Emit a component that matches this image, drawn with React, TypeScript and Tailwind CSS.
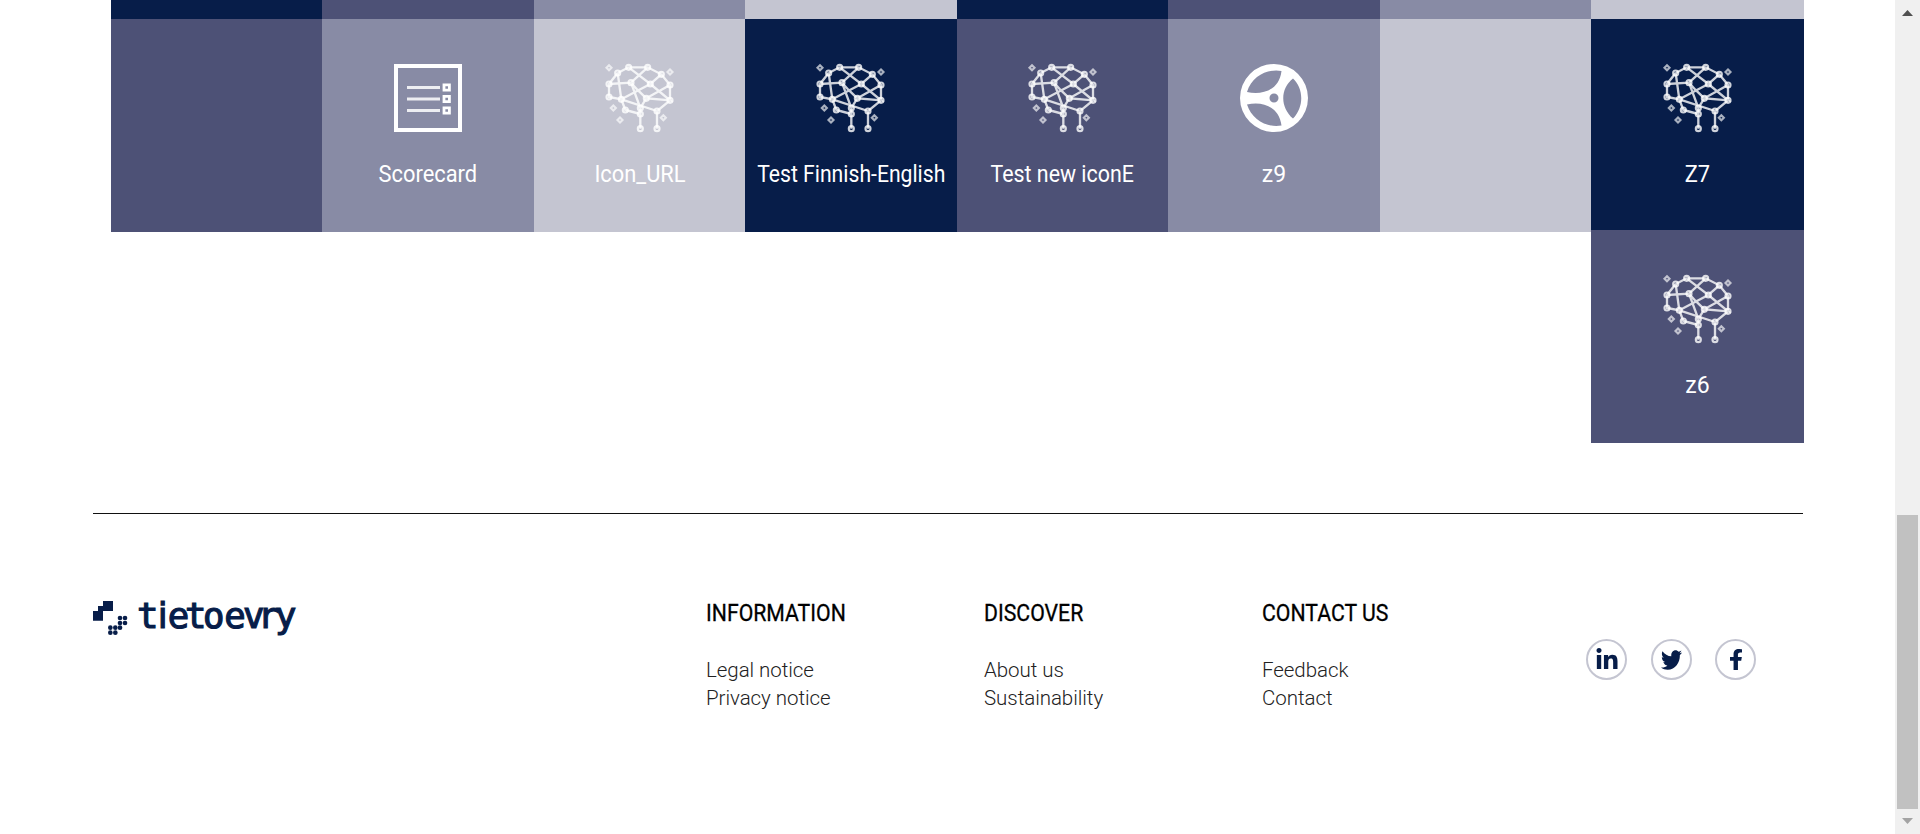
import React from "react";
import { FaFacebookF, FaLinkedinIn, FaTwitter } from "react-icons/fa";

const nodes: [number, number][] = [
  [120, 51], [177, 51], [87, 68], [218, 72], [61, 101], [127, 97], [185, 101],
  [244, 104], [61, 140], [98, 147], [173, 144], [244, 150], [110, 179],
  [155, 173], [155, 191], [205, 182], [155, 235], [205, 235],
];
const sparks: [number, number][] = [[61, 52], [244, 65], [74, 173], [94, 209], [224, 202]];

function Brain() {
  return (
    <svg className="size-17 overflow-visible" viewBox="52 41 204 204" fill="none" stroke="white" strokeOpacity={0.8} strokeWidth={7}>
      <path d="M87 68L120 51H177L218 72L244 104V150L205 182V235M87 68L61 101V140L98 147L110 179L155 191V235M87 68L98 147L205 182M61 101L127 97L177 51M120 51L185 101L218 72M127 97L155 173V191M127 97L146 118L173 144M98 147L185 101M185 101L244 150L173 144L155 173M244 104L173 144" />
      {nodes.map(([x, y]) => <circle key={`${x}-${y}`} cx={x} cy={y} r={7.5} strokeWidth={6.5} />)}
      {sparks.map(([x, y]) => <path key={`${x}-${y}`} strokeWidth={6.5} strokeOpacity={0.65} d={`M${x} ${y - 7.5}l7.5 7.5l-7.5 7.5l-7.5-7.5z`} />)}
    </svg>
  );
}

function Scorecard() {
  return (
    <svg className="size-17" viewBox="0 0 68 68" fill="none" stroke="white">
      <rect x="2" y="2" width="64" height="64" strokeWidth="4" />
      <path strokeWidth="2.8" strokeOpacity="0.85" d="M13 23.5H46M13 35H46M13 46.5H46" />
      <path strokeWidth="2.8" d="M50 20.8h5.4v5.4H50zM50 32.3h5.4v5.4H50zM50 43.8h5.4v5.4H50z" />
    </svg>
  );
}

function Wheel() {
  return (
    <svg className="size-17" viewBox="0 0 68 68">
      <path fill="white" fillRule="evenodd" d="M34 0a34 34 0 1 1 0 68a34 34 0 1 1 0-68zM41.5 7C29 4.5 12 11 7 28C20 31 39 28 41.5 7zM7 40.5C12 56 27 64 41.5 61.5C39 42 22 37 7 40.5zM53 14.5C40 25 40 43 53 54.5C64 43 64 25 53 14.5zM34 29.5a4.5 4.5 0 1 0 0 9a4.5 4.5 0 1 0 0-9z" />
    </svg>
  );
}

function Tile({ className, icon, label, fit = "" }: { className: string; icon?: React.ReactNode; label?: string; fit?: string }) {
  return (
    <div className={`flex flex-col items-center pt-[45px] text-white ${className}`}>
      {icon}
      {label && <div className={`mt-[28px] text-[23px] leading-[30px] whitespace-nowrap ${fit}`}>{label}</div>}
    </div>
  );
}

function LinkColumn({ title, links, className }: { title: string; links: string[]; className: string }) {
  return (
    <div className={className}>
      <h4 className="origin-left scale-x-[0.885] text-[24px] leading-[30px] font-normal whitespace-nowrap text-black [-webkit-text-stroke:0.3px_black]">{title}</h4>
      <ul className="mt-[28px] text-[20.5px] leading-[28px] font-light tracking-[-0.05px] text-[#222]">
        {links.map((l) => <li key={l}>{l}</li>)}
      </ul>
    </div>
  );
}

const logoDots: [number, number][] = [[81, 51], [96, 51], [81, 66], [96, 66], [52, 80], [67, 80], [81, 80], [52, 95], [67, 95]];

function Logo() {
  return (
    <svg className="h-[60px] w-[220px] overflow-visible" viewBox="0 0 660 180" fill="#071d49">
      <path d="M30 0H60V30H30V59H0V30H15V15H30z" />
      {logoDots.map(([x, y]) => <circle key={`${x}-${y}`} cx={x} cy={y} r="7" />)}
      <text y="80" fontSize="107" stroke="#071d49" strokeWidth="3.5" className="font-['DejaVu_Sans_Mono',monospace]">
        <tspan x="132">t</tspan><tspan x="194" className="font-['DejaVu_Sans',sans-serif]">i</tspan><tspan x="224 276 330 394 450 494 546">etoevry</tspan>
      </text>
    </svg>
  );
}

const columns = "grid grid-cols-[211px_212px_211px_212px_211px_212px_211px_213px]";
const social = "flex size-[41px] items-center justify-center rounded-full border-2 border-[#c4c5d1]";

export default function App() {
  return (
    <div className="flex h-[834px] w-[1920px] overflow-hidden bg-white font-[Roboto,sans-serif]">
      <main className="w-[1895px]">
        <div className={`ml-[111px] h-[19px] ${columns}`}>
          <div className="bg-[#071d49]" />
          <div className="bg-[#4d5176]" />
          <div className="bg-[#888ba5]" />
          <div className="bg-[#c4c5d1]" />
          <div className="bg-[#071d49]" />
          <div className="bg-[#4d5176]" />
          <div className="bg-[#888ba5]" />
          <div className="bg-[#c4c5d1]" />
        </div>
        <div className={`ml-[111px] h-[424px] items-start ${columns}`}>
          <Tile className="h-[213px] bg-[#4d5176]" />
          <Tile className="h-[213px] bg-[#888ba5]" icon={<Scorecard />} label="Scorecard" fit="scale-x-[0.95]" />
          <Tile className="h-[213px] bg-[#c4c5d1]" icon={<Brain />} label="Icon_URL" fit="scale-x-[0.95]" />
          <Tile className="h-[213px] bg-[#071d49]" icon={<Brain />} label="Test Finnish-English" fit="scale-x-[0.92]" />
          <Tile className="h-[213px] bg-[#4d5176]" icon={<Brain />} label="Test new iconE" fit="scale-x-[0.93]" />
          <Tile className="h-[213px] bg-[#888ba5]" icon={<Wheel />} label="z9" />
          <Tile className="h-[213px] bg-[#c4c5d1]" />
          <div>
            <Tile className="h-[211px] bg-[#071d49]" icon={<Brain />} label="Z7" fit="scale-x-[0.95]" />
            <Tile className="h-[213px] bg-[#4d5176]" icon={<Brain />} label="z6" />
          </div>
        </div>
        <footer className="mt-[70px] ml-[93px] flex w-[1710px] border-t border-[#111]">
          <div className="w-[613px] pt-[87px]"><Logo /></div>
          <LinkColumn className="w-[278px] pt-[84px]" title="INFORMATION" links={["Legal notice", "Privacy notice"]} />
          <LinkColumn className="w-[278px] pt-[84px]" title="DISCOVER" links={["About us", "Sustainability"]} />
          <LinkColumn className="w-[324px] pt-[84px]" title="CONTACT US" links={["Feedback", "Contact"]} />
          <div className="flex gap-[23.5px] pt-[125px] text-[#071d49]">
            <a className={social}><FaLinkedinIn size={24} /></a>
            <a className={social}><FaTwitter className="h-[24px] w-[21px]" preserveAspectRatio="none" /></a>
            <a className={social}><FaFacebookF className="h-[21px] w-[14px]" preserveAspectRatio="none" /></a>
          </div>
        </footer>
      </main>
      <aside className="flex w-[25px] flex-col items-center bg-[#f0f0f0] pt-[10px]">
        <svg className="h-[6px] w-[11px]" viewBox="0 0 11 6"><path d="M5.5 0L11 6H0z" fill="#505050" /></svg>
        <div className="mt-[499px] h-[294px] w-[21px] bg-[#c1c1c1]" />
        <svg className="mt-[9px] h-[6px] w-[11px]" viewBox="0 0 11 6"><path d="M0 0H11L5.5 6z" fill="#a3a3a3" /></svg>
      </aside>
    </div>
  );
}
